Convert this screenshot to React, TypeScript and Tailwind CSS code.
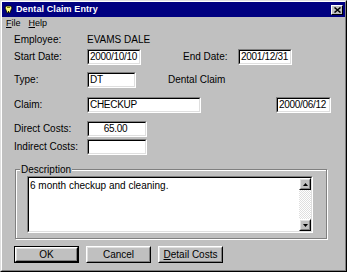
import React from "react";

function Sunken({ w, children, center }: { w: string; children?: React.ReactNode; center?: boolean }) {
  return (
    <div className={`${w} h-[16px] border border-t-[#808080] border-l-[#808080] border-b-white border-r-white bg-white shrink-0`}>
      <div
        className={`h-full border border-t-black border-l-black border-b-[#dfdfdf] border-r-[#dfdfdf] flex items-center ${
          center ? "justify-center" : "pl-[1px]"
        } whitespace-nowrap overflow-hidden tracking-[-0.3px]`}
      >
        {children}
      </div>
    </div>
  );
}

function Raised({ children, className = "" }: { children: React.ReactNode; className?: string }) {
  return (
    <div className={`border border-t-white border-l-white border-r-black border-b-black ${className}`}>
      <div className="h-full border border-t-[#dfdfdf] border-l-[#dfdfdf] border-r-[#808080] border-b-[#808080] flex items-center justify-center">
        {children}
      </div>
    </div>
  );
}

function Row({ children, mt }: { children: React.ReactNode; mt: string }) {
  return <div className={`flex items-center h-[16px] ${mt}`}>{children}</div>;
}

function Label({ w, children, ml = "" }: { w: string; children: React.ReactNode; ml?: string }) {
  return <div className={`${w} ${ml} shrink-0 whitespace-nowrap`}>{children}</div>;
}

export default function App() {
  return (
    <div className="w-[347px] h-[272px] bg-[#c0c0c0] font-['Liberation_Sans',Arial,sans-serif] text-[10px] text-black leading-none border border-t-[#dfdfdf] border-l-[#dfdfdf] border-r-black border-b-black">
      <div className="h-full border border-t-white border-l-white border-r-[#808080] border-b-[#808080] flex flex-col">
        {/* Title bar */}
        <div className="h-[15px] bg-[#000080] flex items-center px-[2px] shrink-0">
          <svg width="9" height="9" viewBox="0 0 9 9" className="shrink-0">
            <path d="M2 1 L7 1 L8 3 L7 5 L6 8 L5 8 L4.5 6 L4 8 L3 8 L2 5 L1 3 Z" fill="#ffff80" stroke="#000" strokeWidth="0.8" />
            <rect x="3" y="2" width="3" height="1" fill="#808000" />
          </svg>
          <span className="ml-[3px] text-white font-bold text-[9px] tracking-[0.1px]">Dental Claim Entry</span>
          <div className="ml-auto w-[12px] h-[10px] border border-t-white border-l-white border-r-black border-b-black bg-[#c0c0c0] flex items-center justify-center">
            <svg width="7" height="6" viewBox="0 0 7 6">
              <path d="M0.5 0.5 L6.5 5.5 M6.5 0.5 L0.5 5.5" stroke="#000" strokeWidth="1.5" />
            </svg>
          </div>
        </div>

        {/* Menu bar */}
        <div className="h-[13px] flex items-center pl-[4px] text-[9px] shrink-0">
          <span>
            <span className="underline">F</span>ile
          </span>
          <span className="ml-[8px]">
            <span className="underline">H</span>elp
          </span>
        </div>

        {/* Content */}
        <div className="pl-[12px] flex flex-col">
          <Row mt="mt-[2px]">
            <Label w="w-[73px]">Employee:</Label>
            <div>EVAMS DALE</div>
          </Row>
          <Row mt="mt-[1px]">
            <Label w="w-[73px]">Start Date:</Label>
            <Sunken w="w-[54px]">2000/10/10</Sunken>
            <Label w="w-[55px]" ml="ml-[42px]">End Date:</Label>
            <Sunken w="w-[54px]">2001/12/31</Sunken>
          </Row>
          <Row mt="mt-[7px]">
            <Label w="w-[73px]">Type:</Label>
            <Sunken w="w-[49px]">DT</Sunken>
            <div className="ml-[32px] whitespace-nowrap">Dental Claim</div>
          </Row>
          <Row mt="mt-[9px]">
            <Label w="w-[73px]">Claim:</Label>
            <Sunken w="w-[114px]">CHECKUP</Sunken>
            <div className="ml-[75px]">
              <Sunken w="w-[55px]">2000/06/12</Sunken>
            </div>
          </Row>
          <Row mt="mt-[8px]">
            <Label w="w-[73px]">Direct Costs:</Label>
            <Sunken w="w-[60px]" center>
              <span className="mr-[3px]">65.00</span>
            </Sunken>
          </Row>
          <Row mt="mt-[2px]">
            <Label w="w-[73px]">Indirect Costs:</Label>
            <Sunken w="w-[60px]" />
          </Row>

          {/* Description group */}
          <div className="relative ml-[1px] mt-[14px] w-[312px] h-[70px] border border-[#808080] shadow-[inset_1px_1px_0_#fff,1px_1px_0_#fff]">
            <div className="absolute left-[4px] top-[-6px] px-[1px] bg-[#c0c0c0] leading-[11px]">Description</div>
            <div className="ml-[11px] mt-[6px] w-[286px] h-[57px] border border-t-[#808080] border-l-[#808080] border-b-white border-r-white bg-white">
              <div className="h-full border border-t-black border-l-black border-b-[#dfdfdf] border-r-[#dfdfdf] flex">
                <div className="flex-1 pl-[1px] pt-[3px]">6 month checkup and cleaning.</div>
                <div className="w-[12px] h-full flex flex-col bg-[repeating-conic-gradient(#dfdfdf_0_25%,#ffffff_0_50%)] bg-[length:2px_2px]">
                  <Raised className="h-[12px] bg-[#c0c0c0]">
                    <svg width="5" height="3" viewBox="0 0 5 3">
                      <path d="M2.5 0 L5 3 L0 3 Z" fill="#000" />
                    </svg>
                  </Raised>
                  <div className="flex-1" />
                  <Raised className="h-[12px] bg-[#c0c0c0]">
                    <svg width="5" height="3" viewBox="0 0 5 3">
                      <path d="M0 0 L5 0 L2.5 3 Z" fill="#000" />
                    </svg>
                  </Raised>
                </div>
              </div>
            </div>
          </div>

          {/* Buttons */}
          <div className="flex mt-[7px]">
            <div className="w-[65px] h-[17px] border border-black">
              <Raised className="h-full">OK</Raised>
            </div>
            <Raised className="ml-[7px] w-[65px] h-[17px]">Cancel</Raised>
            <Raised className="ml-[7px] w-[65px] h-[17px]">
              <span>
                <span className="underline">D</span>etail Costs
              </span>
            </Raised>
          </div>
        </div>
      </div>
    </div>
  );
}
